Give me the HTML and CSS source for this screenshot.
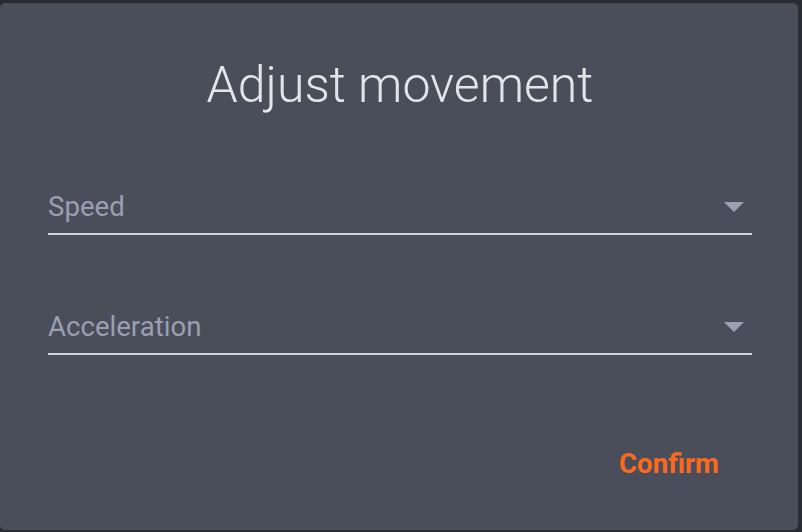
FILE: index.html
```html
<!DOCTYPE html>
<html>
<head>
<meta charset="utf-8">
<link rel="stylesheet" href="styles.css">
</head>
<body>
<div class="dialog">
  <h1 class="title">Adjust movement</h1>
  <div class="fields">
    <div class="field">
      <span class="label">Speed</span>
      <span class="arrow"></span>
    </div>
    <div class="field">
      <span class="label">Acceleration</span>
      <span class="arrow"></span>
    </div>
  </div>
  <div class="actions">
    <button class="confirm">Confirm</button>
  </div>
</div>
</body>
</html>
```
FILE: styles.css
```css
html, body {
  margin: 0;
  padding: 0;
  background: #2b2c33;
  width: 802px;
  height: 532px;
  overflow: hidden;
}
body {
  font-family: Roboto, "Liberation Sans", sans-serif;
}
.dialog {
  margin-top: 3px;
  width: 798px;
  height: 527px;
  background: #4a4e5a;
  border-radius: 5px;
  display: flex;
  flex-direction: column;
  box-sizing: border-box;
  padding: 0 46px 0 48px;
}
.title {
  margin: 0;
  padding-top: 50px;
  text-align: center;
  font-weight: 300;
  font-size: 50px;
  line-height: 64px;
  color: #e4e5ea;
  letter-spacing: 0;
}
.fields {
  display: flex;
  flex-direction: column;
  gap: 62px;
  margin-top: 60px;
}
.field {
  height: 58px;
  box-sizing: border-box;
  border-bottom: 2px solid #d3d5de;
  display: flex;
  align-items: flex-end;
  justify-content: space-between;
  padding-bottom: 10px;
}
.label {
  font-size: 27.6px;
  line-height: 32px;
  color: #9b9fb1;
}
.arrow {
  width: 0;
  height: 0;
  border-left: 10px solid transparent;
  border-right: 10px solid transparent;
  border-top: 10px solid #9b9fb1;
  margin-right: 8px;
  margin-bottom: 11px;
}
.actions {
  display: flex;
  justify-content: flex-end;
  margin-top: 93px;
  padding-right: 33px;
}
.confirm {
  background: none;
  border: none;
  padding: 0;
  font-family: Roboto, "Liberation Sans", sans-serif;
  font-weight: 700;
  font-size: 27.6px;
  line-height: 32px;
  color: #fb6a1c;
  cursor: pointer;
}
```
